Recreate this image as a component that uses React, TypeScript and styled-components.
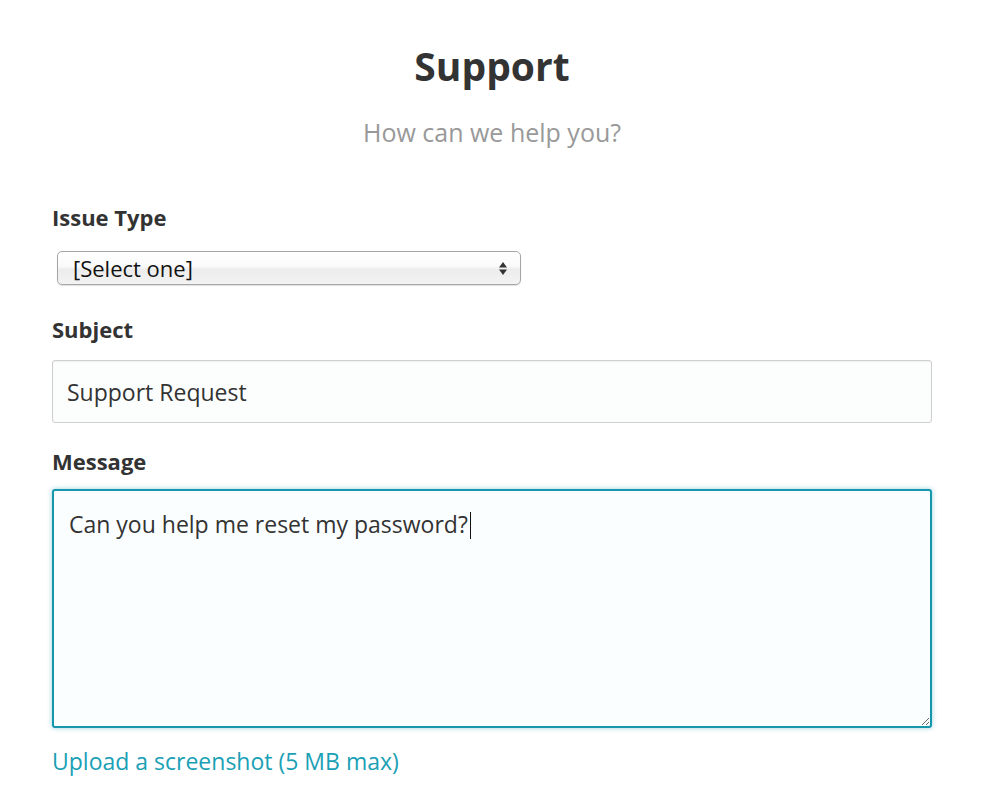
import styled, { createGlobalStyle } from 'styled-components'

const GlobalStyle = createGlobalStyle`
  html, body {
    margin: 0;
    padding: 0;
    background: #fff;
  }
  body {
    font-family: "Open Sans", "Noto Sans", sans-serif;
    color: #333;
  }
`

const Page = styled.div`
  width: 880px;
  margin: 0 auto;
  padding-top: 40px;
`

const Header = styled.header`
  text-align: center;
  margin-bottom: 56px;
`

const Title = styled.h1`
  margin: 0;
  font-size: 39px;
  font-weight: 700;
  line-height: 52px;
  color: #333;
`

const Subtitle = styled.p`
  margin: 25px 0 0;
  font-size: 25px;
  line-height: 30px;
  color: #999;
`

const Field = styled.div`
  display: flex;
  flex-direction: column;
  align-items: flex-start;
  margin-bottom: 24px;
`

const Label = styled.label`
  font-size: 22px;
  font-weight: 700;
  line-height: 28px;
  color: #333;
  margin-bottom: 14px;
`

const SelectBox = styled.div`
  width: 464px;
  height: 34px;
  margin: 6px 0 6px 5px;
  box-sizing: border-box;
  display: flex;
  align-items: center;
  justify-content: space-between;
  padding: 0 12px 0 15px;
  border: 1px solid #a6a6a6;
  border-radius: 5px;
  background: linear-gradient(#ffffff 0%, #fafafa 45%, #ececec 55%, #f3f3f3 100%);
  box-shadow: 0 1px 1px rgba(0, 0, 0, 0.12);
  font-size: 22px;
  color: #111;
`

const Input = styled.div`
  width: 100%;
  height: 63px;
  margin-top: 3px;
  box-sizing: border-box;
  display: flex;
  align-items: center;
  padding: 0 14px;
  border: 1px solid #cfcfcf;
  border-radius: 3px;
  background: #fcfdfd;
  box-shadow: inset 0 1px 2px rgba(0, 0, 0, 0.06);
  font-size: 23px;
  color: #333;
`

const TextArea = styled.div`
  width: 100%;
  height: 239px;
  box-sizing: border-box;
  padding: 18px 15px;
  border: 2px solid #1797ac;
  border-radius: 3px;
  background: #fbfeff;
  box-shadow: 0 0 5px rgba(26, 155, 176, 0.45);
  font-size: 23px;
  line-height: 30px;
  color: #333;
  overflow: auto;
  resize: both;
`

const Caret = styled.span`
  display: inline-block;
  width: 1px;
  height: 27px;
  margin-left: 2px;
  vertical-align: -6px;
  background: #111;
`

const UploadLink = styled.a`
  display: inline-block;
  margin-top: -6px;
  font-size: 23px;
  line-height: 30px;
  color: #1aa0b5;
  text-decoration: none;
`

const Arrows = () => (
  <svg width="10" height="15" viewBox="0 0 10 15">
    <path d="M5 1 L9 6.5 H1 Z" fill="#333" />
    <path d="M5 14 L9 8.5 H1 Z" fill="#333" />
  </svg>
)

const App = () => (
  <>
    <GlobalStyle />
    <Page>
      <Header>
        <Title>Support</Title>
        <Subtitle>How can we help you?</Subtitle>
      </Header>
      <Field>
        <Label>Issue Type</Label>
        <SelectBox>
          <span>[Select one]</span>
          <Arrows />
        </SelectBox>
      </Field>
      <Field>
        <Label>Subject</Label>
        <Input>Support Request</Input>
      </Field>
      <Field>
        <Label>Message</Label>
        <TextArea>
          Can you help me reset my password?<Caret />
        </TextArea>
      </Field>
      <UploadLink href="#">Upload a screenshot (5 MB max)</UploadLink>
    </Page>
  </>
)

export default App
